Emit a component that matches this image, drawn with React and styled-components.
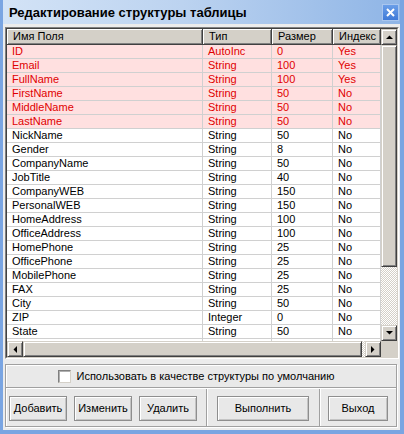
import React from "react";
import styled, { createGlobalStyle } from "styled-components";

const GlobalStyle = createGlobalStyle`
  html, body { margin: 0; padding: 0; background: #ffffff; }
  body { font-family: "Liberation Sans", Arial, sans-serif; font-size: 11px; }
  * { box-sizing: border-box; }
`;

const Window = styled.div`
  width: 404px;
  height: 434px;
  background: #ececec;
  border-left: 3px solid #7aa5e2;
  border-right: 4px solid #7aa5e2;
  border-bottom: 4px solid #7aa5e2;
  display: flex;
  flex-direction: column;
`;

const TitleBar = styled.div`
  height: 24px;
  flex: none;
  display: flex;
  align-items: center;
  justify-content: space-between;
  padding-left: 6px;
  padding-right: 1px;
  background: linear-gradient(to right, #d3e3f6 0%, #bcd3f0 45%, #8fb5e6 100%);
`;

const Title = styled.div`
  font-family: "Liberation Sans", Arial, sans-serif;
  font-weight: bold;
  font-size: 13px;
  color: #000;
  padding-top: 1px;
`;

const CloseButton = styled.div`
  width: 17px;
  height: 17px;
  margin-top: 1px;
  background: linear-gradient(#6a9ee8, #3f7ad8);
  border: 1px solid #a9c6ef;
  display: flex;
  align-items: center;
  justify-content: center;
`;

const Content = styled.div`
  flex: 1;
  display: flex;
  flex-direction: column;
  padding: 3px 1px 3px 2px;
`;

const GridFrame = styled.div`
  width: 394px;
  height: 332px;
  flex: none;
  border-top: 1px solid #808080;
  border-left: 1px solid #808080;
  border-right: 1px solid #ffffff;
  border-bottom: 1px solid #ffffff;
`;

const GridInner = styled.div`
  width: 100%;
  height: 100%;
  border-top: 1px solid #404040;
  border-left: 1px solid #404040;
  border-right: 1px solid #d4d0c8;
  border-bottom: 1px solid #d4d0c8;
  display: grid;
  grid-template-columns: 374px 16px;
  grid-template-rows: 312px 16px;
  background: #ffffff;
`;

const DataArea = styled.div`
  overflow: hidden;
  background: #ffffff;
`;

const Row = styled.div`
  display: grid;
  grid-template-columns: 196px 69px 61px 48px;
  height: ${(p) => (p.$header ? 16 : 14)}px;
  background: ${(p) => (p.$header ? "#d4d0c8" : p.$key ? "#ffe0e0" : "#ffffff")};
  color: ${(p) => (p.$key ? "#e00000" : "#000000")};
`;

const Cell = styled.div`
  border-right: 1px solid #d0d0d0;
  border-bottom: 1px solid #d0d0d0;
  padding-left: 5px;
  line-height: 13px;
  white-space: nowrap;
  overflow: hidden;
`;

const HeadCell = styled.div`
  border-right: 1px solid #404040;
  border-bottom: 1px solid #404040;
  box-shadow: inset 1px 1px #ffffff, inset -1px -1px #808080;
  padding-left: 6px;
  line-height: 15px;
  white-space: nowrap;
  overflow: hidden;
`;

const ScrollV = styled.div`
  display: flex;
  flex-direction: column;
  background: repeating-conic-gradient(#d4d0c8 0 25%, #ffffff 0 50%) 0 0 / 2px 2px;
`;

const ScrollH = styled.div`
  display: flex;
  background: repeating-conic-gradient(#d4d0c8 0 25%, #ffffff 0 50%) 0 0 / 2px 2px;
`;

const ScrollBtn = styled.div`
  width: ${(p) => p.$w || 16}px;
  height: ${(p) => p.$h || 16}px;
  flex: none;
  background: #d4d0c8;
  border-top: 1px solid #d4d0c8;
  border-left: 1px solid #d4d0c8;
  border-right: 1px solid #404040;
  border-bottom: 1px solid #404040;
  box-shadow: inset 1px 1px #ffffff, inset -1px -1px #808080;
  display: flex;
  align-items: center;
  justify-content: center;
`;

const Spacer = styled.div`
  flex: 1;
`;

const Corner = styled.div`
  background: #d4d0c8;
`;

const Panel = styled.div`
  margin-top: 5px;
  width: 392px;
  height: 63px;
  flex: none;
  border: 1px solid #a0a0a0;
  box-shadow: inset 1px 1px #ffffff, 1px 1px #ffffff;
  display: flex;
  flex-direction: column;
  background: #e9e9e9;
`;

const CheckRow = styled.label`
  height: 23px;
  flex: none;
  display: flex;
  align-items: center;
  justify-content: center;
  gap: 6px;
  border-bottom: 1px solid #a0a0a0;
  box-shadow: 0 1px #ffffff;
  padding-right: 10px;
  color: #000;
`;

const CheckBox = styled.span`
  width: 13px;
  height: 13px;
  background: #ffffff;
  border-top: 1px solid #808080;
  border-left: 1px solid #808080;
  border-right: 1px solid #d4d0c8;
  border-bottom: 1px solid #d4d0c8;
  box-shadow: inset 1px 1px #b0b0b0;
`;

const ButtonRow = styled.div`
  flex: 1;
  display: grid;
  grid-template-columns: 201px 113px 1fr;
  margin-top: 1px;
`;

const Section = styled.div`
  display: flex;
  align-items: center;
  justify-content: ${(p) => (p.$start ? "flex-start" : "center")};
  gap: 7px;
  padding-left: ${(p) => (p.$start ? 3 : 0)}px;
  border-right: ${(p) => (p.$last ? "none" : "1px solid #a0a0a0")};
  box-shadow: ${(p) => (p.$last ? "none" : "1px 0 #ffffff")};
`;

const Button = styled.button`
  width: ${(p) => p.$w}px;
  height: 25px;
  padding: 0;
  margin-top: 1px;
  font-family: "Liberation Sans", Arial, sans-serif;
  font-size: 11px;
  color: #000;
  background: #e8e8e8;
  border: 1px solid #8e8e8e;
  box-shadow: inset 1px 1px #ffffff, inset -1px -1px #c4c4c4;
`;

const Arrow = ({ dir }) => {
  const pts = {
    up: "0,4 7,4 3.5,0.5",
    down: "0,0 7,0 3.5,3.5",
    left: "4,0 4,7 0.5,3.5",
    right: "0,0 0,7 3.5,3.5",
  }[dir];
  const vertical = dir === "up" || dir === "down";
  return (
    <svg width={vertical ? 7 : 4} height={vertical ? 4 : 7} viewBox={vertical ? "0 0 7 4" : "0 0 4 7"}>
      <polygon points={pts} fill="#000" />
    </svg>
  );
};

const rows = [
  ["ID", "AutoInc", "0", "Yes", true],
  ["Email", "String", "100", "Yes", true],
  ["FullName", "String", "100", "Yes", true],
  ["FirstName", "String", "50", "No", true],
  ["MiddleName", "String", "50", "No", true],
  ["LastName", "String", "50", "No", true],
  ["NickName", "String", "50", "No"],
  ["Gender", "String", "8", "No"],
  ["CompanyName", "String", "50", "No"],
  ["JobTitle", "String", "40", "No"],
  ["CompanyWEB", "String", "150", "No"],
  ["PersonalWEB", "String", "150", "No"],
  ["HomeAddress", "String", "100", "No"],
  ["OfficeAddress", "String", "100", "No"],
  ["HomePhone", "String", "25", "No"],
  ["OfficePhone", "String", "25", "No"],
  ["MobilePhone", "String", "25", "No"],
  ["FAX", "String", "25", "No"],
  ["City", "String", "50", "No"],
  ["ZIP", "Integer", "0", "No"],
  ["State", "String", "50", "No"],
  ["", "", "", ""],
];

export default function App() {
  return (
    <>
      <GlobalStyle />
      <Window>
        <TitleBar>
          <Title>Редактирование структуры таблицы</Title>
          <CloseButton>
            <svg width="9" height="9" viewBox="0 0 9 9">
              <path d="M1 1 L8 8 M8 1 L1 8" stroke="#fff" strokeWidth="2" />
            </svg>
          </CloseButton>
        </TitleBar>
        <Content>
          <GridFrame>
            <GridInner>
              <DataArea>
                <Row $header>
                  <HeadCell>Имя Поля</HeadCell>
                  <HeadCell>Тип</HeadCell>
                  <HeadCell>Размер</HeadCell>
                  <HeadCell>Индекс</HeadCell>
                </Row>
                {rows.map((r, i) => (
                  <Row key={i} $key={r[4]}>
                    <Cell>{r[0]}</Cell>
                    <Cell>{r[1]}</Cell>
                    <Cell>{r[2]}</Cell>
                    <Cell>{r[3]}</Cell>
                  </Row>
                ))}
              </DataArea>
              <ScrollV>
                <ScrollBtn><Arrow dir="up" /></ScrollBtn>
                <ScrollBtn $h={222} />
                <Spacer />
                <ScrollBtn><Arrow dir="down" /></ScrollBtn>
              </ScrollV>
              <ScrollH>
                <ScrollBtn><Arrow dir="left" /></ScrollBtn>
                <ScrollBtn $w={339} />
                <Spacer />
                <ScrollBtn><Arrow dir="right" /></ScrollBtn>
              </ScrollH>
              <Corner />
            </GridInner>
          </GridFrame>
          <Panel>
            <CheckRow>
              <CheckBox />
              <span>Использовать в качестве структуры по умолчанию</span>
            </CheckRow>
            <ButtonRow>
              <Section $start>
                <Button $w={58}>Добавить</Button>
                <Button $w={58}>Изменить</Button>
                <Button $w={58}>Удалить</Button>
              </Section>
              <Section>
                <Button $w={92}>Выполнить</Button>
              </Section>
              <Section $last>
                <Button $w={60}>Выход</Button>
              </Section>
            </ButtonRow>
          </Panel>
        </Content>
      </Window>
    </>
  );
}
